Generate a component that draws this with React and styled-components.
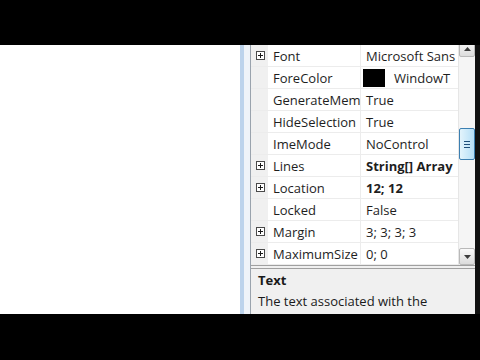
import React from "react";
import styled, { createGlobalStyle } from "styled-components";

const GlobalStyle = createGlobalStyle`
  html, body {
    margin: 0;
    padding: 0;
    background: #000;
    width: 480px;
    height: 360px;
    overflow: hidden;
  }
  body {
    font-family: "Open Sans", "Noto Sans", sans-serif;
  }
`;

// only the part of each text that is visible in the narrow grid
const properties = [
  { name: "Font", value: "Microsoft Sans", expand: true },
  { name: "ForeColor", value: "WindowT", swatch: "#000" },
  { name: "GenerateMem", value: "True" },
  { name: "HideSelection", value: "True" },
  { name: "ImeMode", value: "NoControl" },
  { name: "Lines", value: "String[] Array", expand: true, bold: true },
  { name: "Location", value: "12; 12", expand: true, bold: true },
  { name: "Locked", value: "False" },
  { name: "Margin", value: "3; 3; 3; 3", expand: true },
  { name: "MaximumSize", value: "0; 0", expand: true },
];

function PlusBox() {
  return (
    <svg width="9" height="9" viewBox="0 0 9 9">
      <rect x="0.5" y="0.5" width="8" height="8" fill="#fff" stroke="#4a4a4a" />
      <path d="M2 4.5h5M4.5 2v5" stroke="#1a1a1a" strokeWidth="1" />
    </svg>
  );
}

function Arrow({ down }) {
  return (
    <svg width="7" height="4" viewBox="0 0 7 4">
      <path d={down ? "M0 0h7L3.5 4z" : "M0 4h7L3.5 0z"} fill="#3d3d3d" />
    </svg>
  );
}

export default function App() {
  return (
    <>
      <GlobalStyle />
      <Screen>
        <Letterbox $h={45} />
        <Stage>
          <Canvas />
          <FrameEdge />
          <Panel>
            <GridArea>
              <Rows>
                {properties.map((p) => (
                  <Row key={p.name}>
                    <Gutter>{p.expand && <PlusBox />}</Gutter>
                    <NameCell>{p.name}</NameCell>
                    <ValueCell $bold={p.bold}>
                      {p.swatch && <Swatch $color={p.swatch} />}
                      {p.value}
                    </ValueCell>
                  </Row>
                ))}
              </Rows>
              <Scrollbar>
                <ScrollButton $top={-5}>
                  <Arrow />
                </ScrollButton>
                <Track>
                  <Thumb>
                    <svg width="6" height="7" viewBox="0 0 6 7">
                      <path d="M0 0.5h6M0 3.5h6M0 6.5h6" stroke="#1f4f7a" />
                    </svg>
                  </Thumb>
                </Track>
                <ScrollButton>
                  <Arrow down />
                </ScrollButton>
              </Scrollbar>
            </GridArea>
            <Description>
              <DescTitle>Text</DescTitle>
              <DescText>The text associated with the control.</DescText>
            </Description>
          </Panel>
          <RightEdge />
        </Stage>
        <Letterbox $h={46} />
      </Screen>
    </>
  );
}

const Screen = styled.div`
  width: 480px;
  height: 360px;
  display: flex;
  flex-direction: column;
  background: #000;
`;

const Letterbox = styled.div`
  height: ${(p) => p.$h}px;
  flex: none;
  background: #000;
`;

const Stage = styled.div`
  height: 269px;
  flex: none;
  display: flex;
  overflow: hidden;
`;

const Canvas = styled.div`
  width: 240px;
  flex: none;
  background: #fff;
`;

const FrameEdge = styled.div`
  width: 6px;
  flex: none;
  border-left: 4px solid #bcd3ec;
  border-right: 1px solid #9aa3ad;
  background: #eef3f9;
`;

const Panel = styled.div`
  width: 224px;
  flex: none;
  display: flex;
  flex-direction: column;
  background: #f0f0f0;
`;

const GridArea = styled.div`
  height: 220px;
  flex: none;
  display: flex;
  border-bottom: 1px solid #a0a0a0;
`;

const Rows = styled.div`
  flex: 1;
  display: flex;
  flex-direction: column;
  background: #fff;
  overflow: hidden;
`;

const Row = styled.div`
  height: 22px;
  flex: none;
  display: grid;
  grid-template-columns: 17px 93px 1fr;
  box-sizing: border-box;
  border-bottom: 1px solid #ececec;
  font-size: 13px;
  color: #1e1e1e;
`;

const Gutter = styled.div`
  display: flex;
  align-items: center;
  justify-content: center;
  background: #f0f0f0;
  padding-left: 1px;
`;

const NameCell = styled.div`
  display: flex;
  align-items: center;
  padding-left: 5px;
  white-space: nowrap;
  overflow: hidden;
  border-right: 1px solid #ececec;
`;

const ValueCell = styled.div`
  display: flex;
  align-items: center;
  padding-left: 5px;
  white-space: nowrap;
  overflow: hidden;
  font-weight: ${(p) => (p.$bold ? 700 : 400)};
`;

const Swatch = styled.span`
  width: 22px;
  height: 18px;
  flex: none;
  background: ${(p) => p.$color};
  margin: 0 9px 0 -3px;
`;

const Scrollbar = styled.div`
  width: 17px;
  flex: none;
  display: flex;
  flex-direction: column;
  background: #f3f3f3;
  border-left: 1px solid #e6e6e6;
  box-sizing: border-box;
`;

const ScrollButton = styled.div`
  height: 17px;
  flex: none;
  margin-top: ${(p) => p.$top || 0}px;
  display: flex;
  align-items: center;
  justify-content: center;
  box-sizing: border-box;
  border: 1px solid #b9b9b9;
  border-radius: 2px;
  background: linear-gradient(#fafafa, #dcdcdc);
`;

const Track = styled.div`
  flex: 1;
  padding-top: 71px;
  background: #f5f5f5;
`;

const Thumb = styled.div`
  height: 32px;
  display: flex;
  align-items: center;
  justify-content: center;
  box-sizing: border-box;
  border: 1px solid #3c7fb1;
  border-radius: 2px;
  background: linear-gradient(90deg, #e3f4fc, #b5dff7);
`;

const Description = styled.div`
  flex: 1;
  margin-top: 2px;
  border-top: 1px solid #a0a0a0;
  padding: 1px 0 0 7px;
  font-size: 13px;
  color: #1a1a1a;
`;

const DescTitle = styled.div`
  font-weight: 700;
  line-height: 20px;
`;

const DescText = styled.div`
  line-height: 22px;
  width: 190px;
`;

const RightEdge = styled.div`
  width: 5px;
  flex: none;
  background: #111;
`;
